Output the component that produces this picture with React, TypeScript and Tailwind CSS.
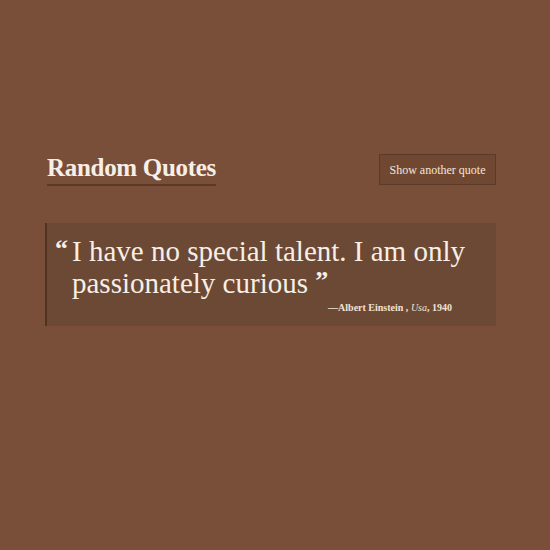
export default function App() {
  return (
    <div
      className="min-h-[550px] w-full bg-[#7a4f39] text-[#f7efe6]"
      style={{ fontFamily: '"Liberation Serif", "DejaVu Serif", serif' }}
    >
      <div className="ml-[45px] w-[451px] pt-[153px]">
        <div className="flex items-center justify-between">
          <h1 className="ml-[2px] border-b-2 border-[#5c3a28] pb-[1px] text-[25px] font-bold leading-[30px] tracking-[-0.3px]">
            Random Quotes
          </h1>
          <button className="h-[31px] w-[117px] border border-[#5a3a29] bg-[#704832] text-[12px] text-[#f3e6da]">
            Show another quote
          </button>
        </div>

        <div className="mt-[37px] h-[103px] border-l-2 border-[#4f3221] bg-[#6c4934] pl-[8px] pt-[12px]">
          <div className="flex">
            <span className="mr-[4px] mt-[4px] text-[26px] font-bold leading-[20px]">“</span>
            <div className="w-[415px]">
              <p className="text-[29px] leading-[32px]">
                I have no special talent. I am only passionately curious{' '}
                <span className="align-[4px] text-[26px] font-bold leading-none">”</span>
              </p>
              <p className="mt-[3px] w-[380px] text-right text-[10px] font-bold leading-[12px] text-[#efe2d6]">
                —Albert Einstein , <i className="font-normal">Usa</i>, 1940
              </p>
            </div>
          </div>
        </div>
      </div>
    </div>
  );
}
